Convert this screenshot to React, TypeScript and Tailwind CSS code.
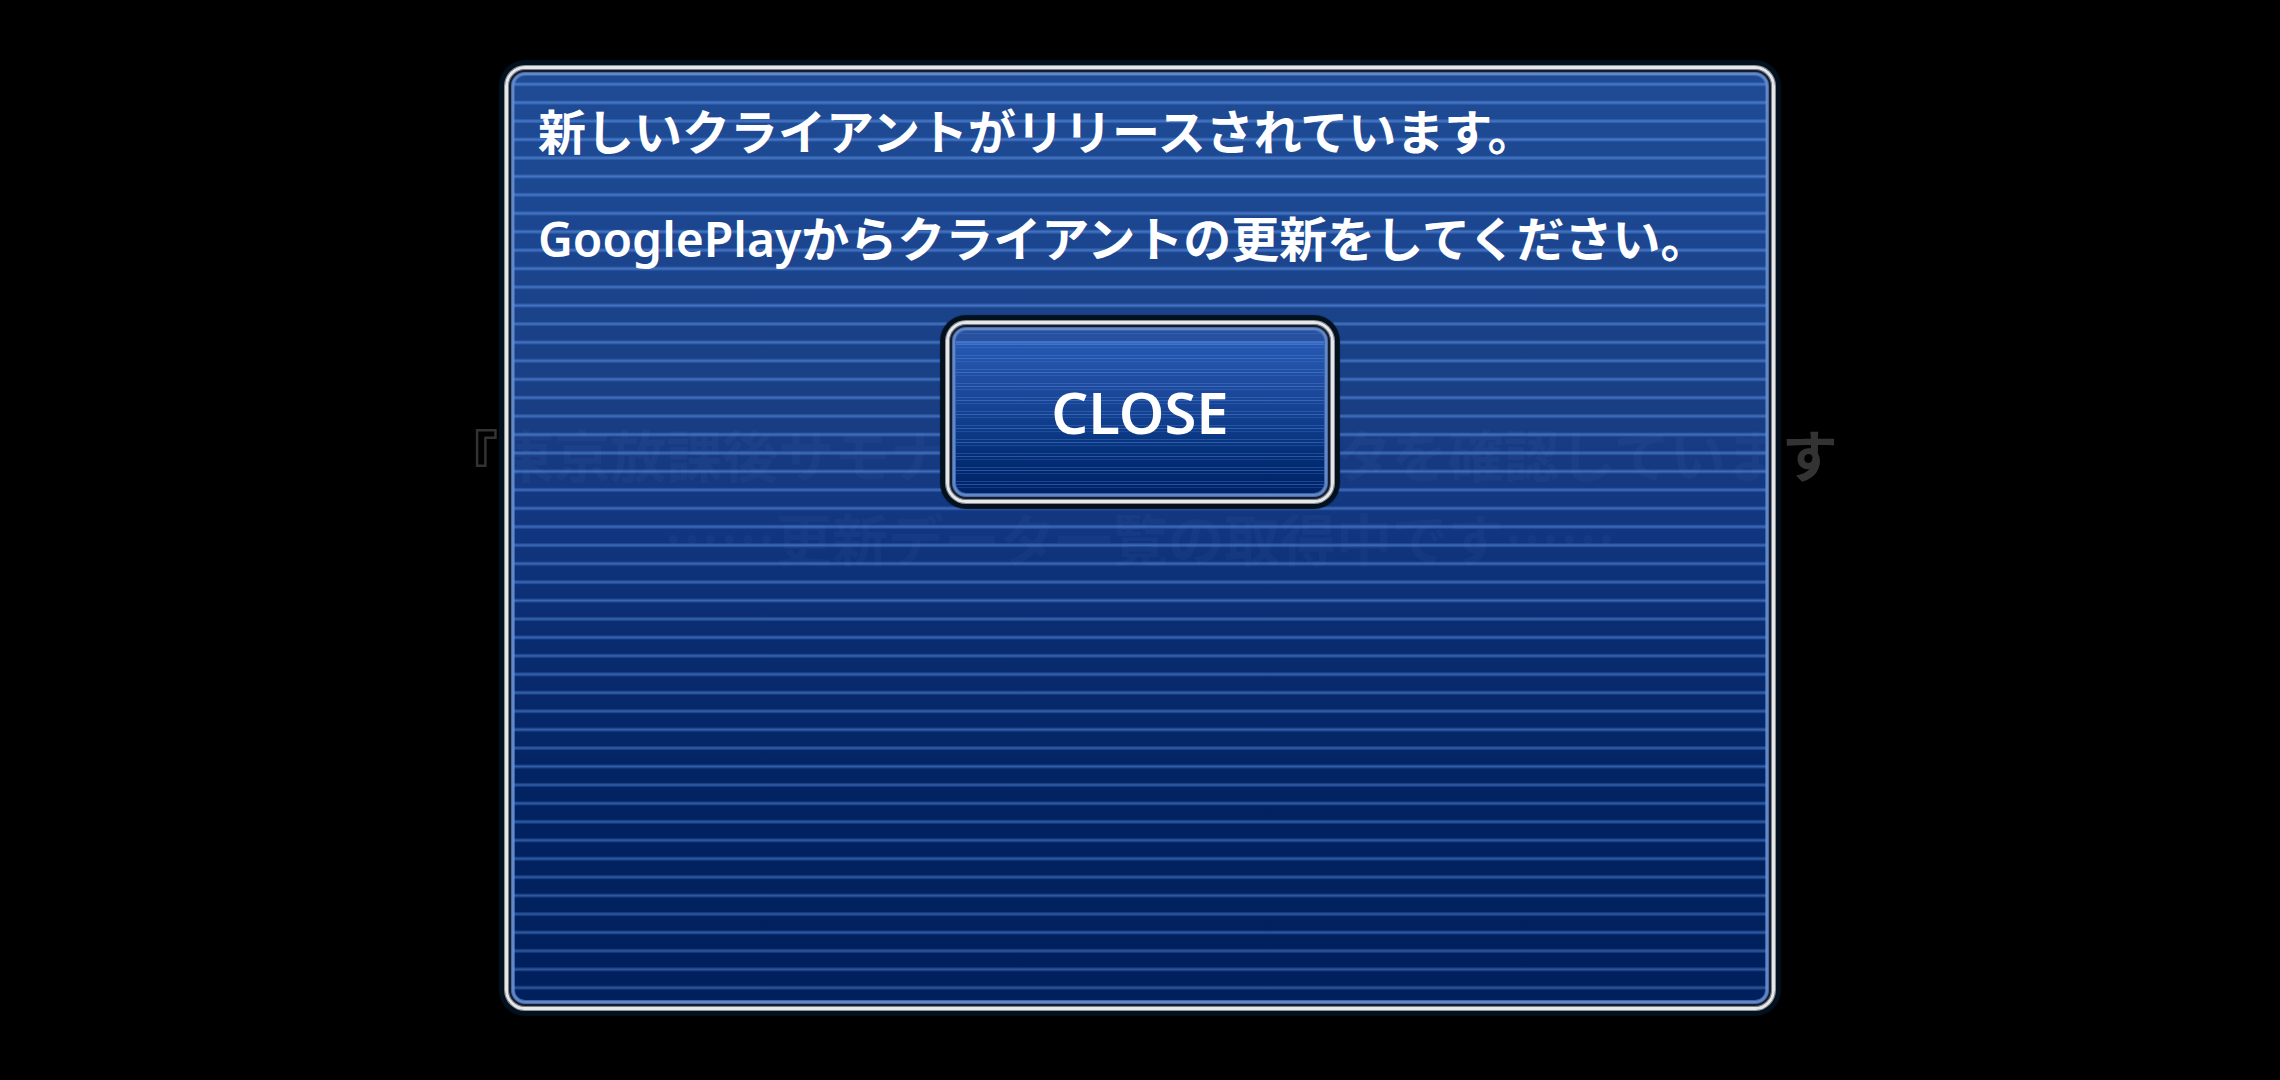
import React from "react";

const FONT = "font-['Noto_Sans','Noto_Sans_CJK_JP',sans-serif]";

const FRAME =
  "border-3 border-[#e6e7e9] rounded-[20px] bg-clip-padding " +
  "shadow-[0_0_0_1px_#8a8d92,0_0_0_5px_#03111f,0_0_1px_6px_#03111f,inset_0_0_0_1px_#7d8188,inset_0_0_0_3px_#141c30,inset_0_0_0_4px_#4a6ca6,inset_0_0_0_6px_#6488c6,inset_0_0_0_7px_#3a66b0]";

function LoadingStatus() {
  return (
    <div className="absolute inset-x-0 top-[413px] flex flex-col items-center gap-[4px] font-['Noto_Sans_CJK_JP',sans-serif] text-[56px] leading-[80px] font-bold whitespace-nowrap text-[#333333]">
      <p>『東京放課後サモナーズ』更新データを確認しています</p>
      <p>……更新データ一覧の取得中です……</p>
    </div>
  );
}

function Stripes() {
  return (
    <div
      aria-hidden="true"
      className="pointer-events-none absolute inset-x-[5px] top-[6px] bottom-[10px] bg-[repeating-linear-gradient(to_bottom,transparent_0%,transparent_0.72%,rgba(92,146,228,0.36)_0.86%,rgba(92,146,228,0.66)_1%,rgba(92,146,228,0.36)_1.14%,transparent_1.28%,transparent_2%)] [mask-image:linear-gradient(to_bottom,black,rgba(0,0,0,0.75))]"
    />
  );
}

function CloseButton() {
  return (
    <button
      type="button"
      className={`${FRAME} h-[182px] w-[388px] cursor-pointer bg-[linear-gradient(to_bottom,transparent_17px,rgba(84,132,220,0.8)_18px,rgba(84,132,220,0.5)_19px,transparent_21px),repeating-linear-gradient(to_bottom,transparent_0px,transparent_3px,rgba(92,146,228,0.3)_3px,rgba(92,146,228,0.3)_4px,transparent_4px,transparent_6px,rgba(92,146,228,0.42)_6px,rgba(92,146,228,0.42)_7px,transparent_7px,transparent_9px,rgba(92,146,228,0.22)_9px,rgba(92,146,228,0.22)_10px,transparent_10px,transparent_14px),linear-gradient(to_bottom,#27509f_0px,#27509f_16px,#2558b2_20px,#1f4b9f_60px,#103d8b_100px,#032d75_135px,#002266_170px)]`}
    >
      <span className="block text-[58px] leading-[78px] font-semibold text-white">CLOSE</span>
    </button>
  );
}

export default function App() {
  return (
    <main lang="ja" className={`relative flex min-h-screen justify-center overflow-hidden bg-black pt-[66px] pb-[70px] ${FONT}`}>
      <LoadingStatus />
      <section
        role="dialog"
        aria-labelledby="update-message"
        className={`${FRAME} relative w-full max-w-[1270px] bg-[linear-gradient(to_bottom,rgba(35,82,164,0.9)_0%,rgba(31,79,161,0.9)_14%,rgba(28,69,146,0.9)_36%,rgba(20,60,142,0.9)_48%,rgba(11,50,126,0.9)_60%,rgba(2,38,108,0.9)_78%,rgba(0,35,102,0.9)_100%)]`}
      >
        <Stripes />
        <div className="relative flex flex-col px-[30px] pt-[28px]">
          <div
            id="update-message"
            className="flex flex-col gap-[37px] text-[48px] leading-[70px] font-bold whitespace-nowrap text-white"
          >
            <p>新しいクライアントがリリースされています。</p>
            <p>
              <span className="font-semibold">GooglePlay</span>からクライアントの更新をしてください。
            </p>
          </div>
          <div className="mt-[47px] flex justify-center">
            <CloseButton />
          </div>
        </div>
      </section>
    </main>
  );
}
